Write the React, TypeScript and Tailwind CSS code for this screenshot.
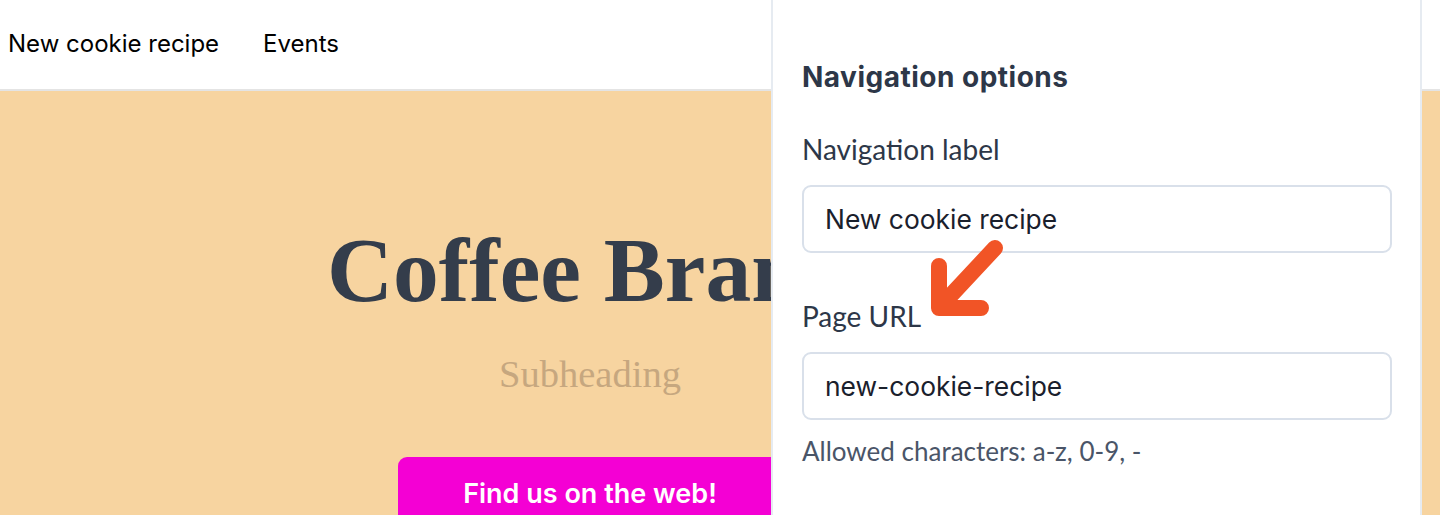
import React from "react";

const NavLink = ({ label }: { label: string }) => (
  <a className="text-[24px] leading-[33px] text-black" href="#">
    {label}
  </a>
);

const Field = ({ label, value, className }: { label: string; value: string; className?: string }) => (
  <div className={className}>
    <label className="block text-[28px] leading-[34px] text-[#2d3748]">{label}</label>
    <input
      type="text"
      defaultValue={value}
      readOnly
      className="mt-[19px] block h-[68px] w-full rounded-[9px] border-2 border-[#d9e0ea] bg-white px-[21px] text-[26.4px] text-[#1a202c] outline-none [font-family:Inter,sans-serif]"
    />
  </div>
);

export default function App() {
  return (
    <div className="relative h-[515px] w-[1440px] overflow-hidden bg-[#f7d4a0] [font-family:Inter,sans-serif]">
      {/* Site header */}
      <header className="flex h-[91px] items-center gap-[44px] border-b-2 border-[#e4e4e4] bg-white pl-2 pb-[3px]">
        <NavLink label="New cookie recipe" />
        <NavLink label="Events" />
      </header>

      {/* Hero */}
      <section className="flex w-[1180px] flex-col items-center pt-[134px]">
        <h1 className="text-[91.5px] font-bold leading-none text-[#343d4b] [font-family:'Liberation_Serif',serif]">
          Coffee Brand
        </h1>
        <p className="mt-[38px] text-[38.5px] leading-none text-[#c6a77f] [font-family:'Liberation_Serif',serif]">
          Subheading
        </p>
        <button className="mt-[64px] rounded-[9px] bg-[#f400d4] px-[65px] pt-[17px] pb-[20px] text-[27px] font-semibold leading-[39px] text-white">
          Find us on the web!
        </button>
      </section>

      {/* Navigation options panel */}
      <aside className="absolute top-0 left-[771px] h-full w-[651px] border-x-2 border-[#e6ebf1] bg-white pt-[60px] pr-[28px] pl-[29px] [font-family:Lato,sans-serif]">
        <h2 className="text-[28px] font-bold leading-[34px] tracking-[0.5px] text-[#2d3748] [font-family:Inter,sans-serif]">
          Navigation options
        </h2>
        <Field className="mt-[38px]" label="Navigation label" value="New cookie recipe" />
        <Field className="mt-[46px]" label="Page URL" value="new-cookie-recipe" />
        <p className="mt-[15px] text-[26px] leading-[32px] text-[#4a5568]">Allowed characters: a-z, 0-9, -</p>

        {/* annotation arrow */}
        <svg className="absolute top-[238px] left-[158px]" width="76" height="78" viewBox="0 0 76 78" fill="none">
          <path
            d="M64 10 L8 70 M8 28 L8 70 L50 70"
            stroke="#f15426"
            strokeWidth="16"
            strokeLinecap="round"
            strokeLinejoin="round"
          />
        </svg>
      </aside>
    </div>
  );
}
